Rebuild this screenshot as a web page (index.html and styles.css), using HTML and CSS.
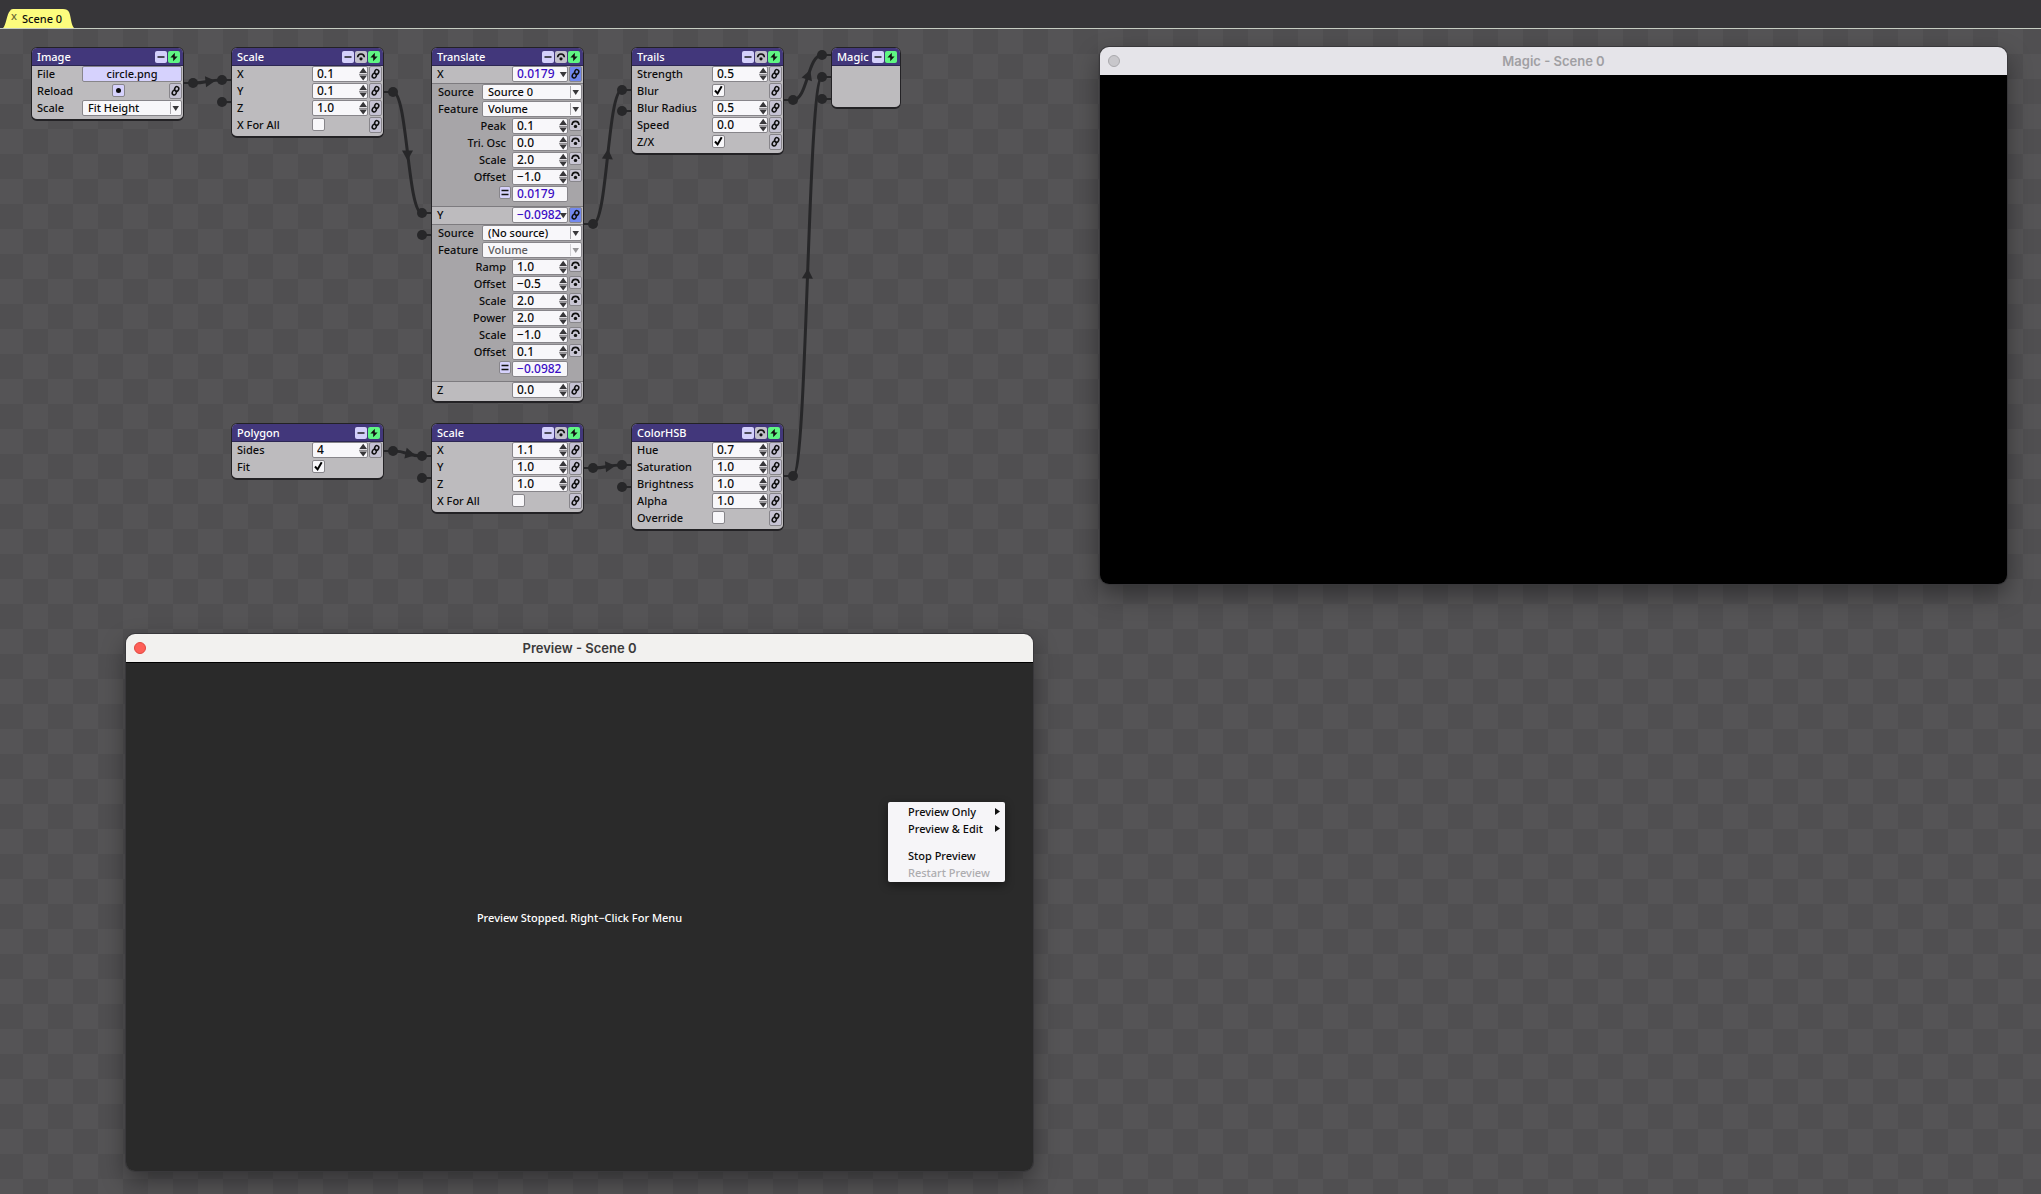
FILE: index.html
```html
<!DOCTYPE html>
<html lang="en">
<head>
<meta charset="utf-8">
<title>Scene 0</title>
<link rel="stylesheet" href="styles.css">
</head>
<body>
<header class="tabbar">
  <div class="tab">
    <svg class="tab-shape" viewBox="0 0 71 19" preserveAspectRatio="none" aria-hidden="true"><path d="M0 19C3 17 4 4 7 2C8 0 9 0 12 0H60C63 0 65 1 66 3C68 7 68 16 71 19Z"/></svg>
    <button class="tab-close" aria-label="Close tab">x</button>
    <a class="tab-name" href="#scene">Scene 0</a>
  </div>
</header>
<main class="canvas" id="scene"></main>
<script src="app.js"></script>
</body>
</html>
```

FILE: styles.css
```css
* { box-sizing: border-box; }
html, body { height: 100%; }
body {
  margin: 0;
  display: flex;
  flex-direction: column;
  overflow: hidden;
  background: #555456;
  color: #0c0c0c;
  font: 500 11px/17px "Noto Sans", "Open Sans", sans-serif;
}
button, input, select {
  font: inherit;
  color: inherit;
  margin: 0;
  padding: 0;
  appearance: none;
  border: 0;
  background: none;
}

/* tab bar */
.tabbar {
  height: 29px;
  flex: none;
  display: flex;
  align-items: flex-end;
  padding-left: 3px;
  background: #373639;
  border-bottom: 1px solid #c6cdc2;
}
.tab {
  position: relative;
  display: flex;
  height: 19px;
  width: 71px;
  padding-left: 8px;
  gap: 5px;
}
.tab-shape { position: absolute; inset: 0; width: 100%; height: 100%; fill: #fdfc7d; }
.tab-close { position: relative; width: 6px; height: 13px; line-height: 12px; font-size: 11px; color: #6b6a35; }
.tab-name { position: relative; line-height: 20px; color: inherit; text-decoration: none; }

/* node canvas */
.canvas {
  flex: 1;
  position: relative;
  background: conic-gradient(#504f51 25%, #555456 0 50%, #504f51 0 75%, #555456 0) 48px 0 / 50px 50px;
}
.wires { position: absolute; left: 0; top: 0; width: 910px; height: 560px; }
.wires .line { fill: none; stroke: #272729; stroke-width: 3px; }
.wires .stub { fill: none; stroke: #272729; stroke-width: 2px; }
.wires .mark { fill: #272729; }

.node {
  position: absolute;
  width: 153px;
  border: 1px solid #232225;
  border-bottom-width: 2px;
  border-radius: 6px;
  padding-bottom: 2px;
  background: #bdbbbe;
}
.node-magic { width: 70px; height: 62px; }
.node-head {
  display: flex;
  align-items: center;
  gap: 1px;
  height: 18px;
  padding: 0 3px 0 5px;
  border-radius: 5px 5px 0 0;
  border-bottom: 1px solid #2c2653;
  background: #42377b;
}
.node-name { flex: 1; margin: 0; font: inherit; color: #fff; }
.head-btn { display: block; width: 12px; height: 12px; border-radius: 2px; background: #d4d0fb; }
.head-btn.grey { background: #c3c1cb; }
.head-btn.green { background: #5ff783; }
.head-btn svg, .link svg, .target svg, .equals svg { display: block; width: 100%; height: 100%; }

.row { display: flex; align-items: flex-start; height: 17px; padding: 0 1px 0 5px; gap: 1px; }
.row .label { flex: 1; white-space: nowrap; line-height: 16px; }
.sub { background: #a7a5a8; border: solid #7d7b7f; border-width: 1px 0; padding: 0 0 3px; }
.sub .label { text-align: right; padding-right: 5px; }
.sub .label.start { text-align: left; padding-right: 0; padding-left: 1px; }

.field {
  display: flex;
  align-items: center;
  width: 56px;
  height: 16px;
  border: 1px solid #87858a;
  border-radius: 2px;
  background: #f8f7fa;
}
.field input { flex: 1; width: 20px; height: 14px; padding-left: 4px; font-size: 12px; line-height: 14px; }
.field svg { display: block; width: 10px; height: 14px; }
.field.computed { color: #3a0cc4; }
.field.bound svg { margin-left: -4px; }
.wide { width: 100px; }
.file { height: 16px; border: 1px solid #87858a; border-radius: 2px; background: #d6d2fd; line-height: 14px; }
.picker { display: grid; height: 16px; align-items: center; }
.picker select {
  grid-area: 1 / 1;
  width: 100px;
  height: 16px;
  padding-left: 5px;
  border: 1px solid #87858a;
  border-radius: 2px;
  background: #f8f7fa;
  line-height: 14px;
  opacity: 1;
}
.picker svg { grid-area: 1 / 1; justify-self: end; width: 12px; height: 16px; pointer-events: none; }
.picker select:disabled { color: #5e5d60; }
.picker select:disabled + svg { opacity: .5; }

.link { width: 13px; height: 16px; border: 1px solid #87858a; border-radius: 2px; background: #c6c3d4; }
.link.on { background: #7288ef; }
.target { width: 13px; height: 13px; border: 1px solid #87858a; border-radius: 2px; background: #c9c6d4; }
.gap { width: 13px; }
.equals { width: 12px; height: 13px; border: 1px solid #87858a; border-radius: 2px; background: #d6d2fd; }
.slot { display: flex; width: 56px; height: 16px; }
.check { display: grid; width: 13px; height: 13px; margin-top: 1px; }
.check input { grid-area: 1 / 1; width: 13px; height: 13px; border: 1px solid #87858a; border-radius: 2px; background: #f8f7fa; }
.check svg { grid-area: 1 / 1; width: 13px; height: 13px; visibility: hidden; pointer-events: none; }
.check input:checked + svg { visibility: visible; }
.slot.reload { width: 86px; padding-left: 30px; }
.reload button { width: 13px; height: 13px; margin-top: 1px; border: 1px solid #87858a; border-radius: 2px; background: #d6d2fd; display: grid; place-items: center; }
.reload button::before { content: ""; width: 5px; height: 5px; border-radius: 50%; background: #0c0c0c; }

/* floating windows */
.window {
  position: absolute;
  width: 907px;
  height: 537px;
  display: flex;
  flex-direction: column;
  border-radius: 9px;
  overflow: hidden;
  box-shadow: 0 0 0 1px #39383b, 0 10px 24px rgba(0, 0, 0, .4);
}
.title {
  display: grid;
  grid-template-columns: 1fr auto 1fr;
  align-items: center;
  height: 28px;
  padding: 0 8px;
  background: #f2f1ef;
  color: #3b3a3a;
  font: 600 13px/26px Inter, sans-serif;
}
.title h2 { margin: 0; font: inherit; }
.dot { width: 12px; height: 12px; border: 1px solid #df483f; border-radius: 50%; background: #fe5f57; }
.inactive .title { background: #e5e4e9; color: #a09fa3; }
.inactive .dot { border-color: #a9a8ac; background: #c8c7cb; }
.screen { flex: 1; display: grid; place-items: center; border-top: 1px solid #000; background: #2a2a2a; color: #fff; }
.screen p { margin: 0; }
.inactive .screen { background: #000; }

.menu {
  position: absolute;
  width: 117px;
  padding: 1px 0;
  display: flex;
  flex-direction: column;
  border-radius: 2px;
  background: #f6f5f8;
  box-shadow: 0 3px 10px rgba(0, 0, 0, .45);
}
.menu button { display: flex; justify-content: space-between; align-items: center; height: 17px; padding: 0 5px 0 20px; white-space: nowrap; }
.menu button:disabled { color: #adacaf; }
.menu hr { width: 100%; height: 10px; margin: 0; border: 0; }
.menu svg { width: 5px; height: 7px; }
```

FILE: app.js
```js
const I = {
  minus: '<svg viewBox="0 0 12 12"><path d="M2.500 6h7" stroke="#111" stroke-width="1.400"/></svg>',
  eye: '<svg viewBox="0 0 12 12"><path d="M2.600 6.300C3 1.900 9 1.900 9.400 6.300" fill="none" stroke="#111" stroke-width="1.600"/><circle cx="6" cy="7.800" r="1.600" fill="#111"/></svg>',
  eyeSmall: '<svg viewBox="0 0 11 11"><path d="M2 6C2.400 1.200 8.600 1.200 9 6" fill="none" stroke="#111" stroke-width="1.700"/><circle cx="5.500" cy="7.400" r="1.700" fill="#111"/></svg>',
  bolt: '<svg viewBox="0 0 12 12"><path d="M6.800 1.800 2.400 6.600H5.200V10.200L9.600 5.400H6.800Z" fill="#111"/></svg>',
  chain: '<svg viewBox="0 0 11 14"><g fill="none" stroke="#111" stroke-width="1.500"><ellipse cx="6.700" cy="5" rx="2" ry="2.400" transform="rotate(25 6.700 5)"/><ellipse cx="4.300" cy="8.600" rx="2" ry="2.400" transform="rotate(25 4.300 8.600)"/></g></svg>',
  spin: '<svg viewBox="0 0 10 14"><path d="M2.300 6 6.200 .8 10 6ZM2.300 8.600 6.200 13.600 10 8.600Z" fill="#38373a"/><path d="M2 7.300h8" stroke="#77757a"/></svg>',
  drop: '<svg viewBox="0 0 10 14"><path d="M2.800 5h7L6.300 10.300Z" fill="#38373a"/></svg>',
  select: '<svg viewBox="0 0 12 16"><path d="M.5 2v12" stroke="#aaa8ad"/><path d="M2.500 6h6.500L5.700 11Z" fill="#38373a"/></svg>',
  equals: '<svg viewBox="0 0 10 11"><path d="M1.500 3.500h7M1.500 7.500h7" stroke="#111" stroke-width="1.500"/></svg>',
  tick: '<svg viewBox="0 0 13 13"><path d="M3 6.500 5.600 9.400 9.700 2.200" fill="none" stroke="#000" stroke-width="2"/></svg>',
  more: '<svg viewBox="0 0 5 7"><path d="M0 0 5 3.500 0 7Z" fill="#111"/></svg>'
};
let n = 0;
const link = on => `<button class="link${on ? ' on' : ''}" aria-label="Link">${I.chain}</button>`;
const target = `<button class="target" aria-label="Modify">${I.eyeSmall}</button>`;
const lab = (id, t, c = '') => `<label class="label ${c}" for="${id}">${t}</label>`;
const input = (id, v, icon, c = '') => `<span class="field ${c}"><input id="${id}" value="${v}">${icon}</span>`;
const row = html => `<div class="row">${html}</div>`;
const num = (t, v) => { const id = 'f' + n++; return row(lab(id, t) + input(id, v, I.spin) + link()); };
const bound = (t, v) => { const id = 'f' + n++; return row(lab(id, t) + input(id, v, I.drop, 'computed bound') + link(true)); };
const mod = (t, v) => { const id = 'f' + n++; return row(lab(id, t) + input(id, v, I.spin) + target); };
const check = (t, on, linked = true) => { const id = 'f' + n++; return row(lab(id, t) + `<span class="slot"><span class="check"><input type="checkbox" id="${id}"${on ? ' checked' : ''}>${I.tick}</span></span>` + (linked ? link() : '<span class="gap"></span>')); };
const pick = (t, v, off, c = 'start') => { const id = 'f' + n++; return row(lab(id, t, c) + `<span class="picker"><select id="${id}"${off ? ' disabled' : ''}><option>${v}</option></select>${I.select}</span>`); };
const result = v => row(`<span class="label"></span><button class="equals" aria-label="Result">${I.equals}</button><span class="field computed"><input aria-label="Result value" readonly value="${v}"></span><span class="gap"></span>`);
const node = (x, y, name, body, eye = true, c = '') => `<section class="node ${c}" style="left:${x}px;top:${y - 29}px"><div class="node-head"><h2 class="node-name">${name}</h2><button class="head-btn" aria-label="Collapse">${I.minus}</button>${eye ? `<button class="head-btn grey" aria-label="Solo">${I.eye}</button>` : ''}<button class="head-btn green" aria-label="Enable">${I.bolt}</button></div>${body}</section>`;

const nodes = [
  node(31, 47, 'Image',
    row('<span class="label">File</span><button class="file wide">circle.png</button>') +
    row(`<span class="label">Reload</span><span class="slot reload"><button aria-label="Reload"></button></span>${link()}`) +
    pick('Scale', 'Fit Height', false, ''), false),
  node(231, 47, 'Scale', num('X', '0.1') + num('Y', '0.1') + num('Z', '1.0') + check('X For All', false)),
  node(431, 47, 'Translate',
    bound('X', '0.0179') +
    `<div class="sub">${pick('Source', 'Source 0') + pick('Feature', 'Volume') + mod('Peak', '0.1') + mod('Tri. Osc', '0.0') + mod('Scale', '2.0') + mod('Offset', '−1.0') + result('0.0179')}</div>` +
    bound('Y', '−0.0982') +
    `<div class="sub">${pick('Source', '(No source)') + pick('Feature', 'Volume', true) + mod('Ramp', '1.0') + mod('Offset', '−0.5') + mod('Scale', '2.0') + mod('Power', '2.0') + mod('Scale', '−1.0') + mod('Offset', '0.1') + result('−0.0982')}</div>` +
    num('Z', '0.0')),
  node(631, 47, 'Trails', num('Strength', '0.5') + check('Blur', true) + num('Blur Radius', '0.5') + num('Speed', '0.0') + check('Z/X', true)),
  node(831, 47, 'Magic', '', false, 'node-magic'),
  node(231, 423, 'Polygon', num('Sides', '4') + check('Fit', true, false), false),
  node(431, 423, 'Scale', num('X', '1.1') + num('Y', '1.0') + num('Z', '1.0') + check('X For All', false)),
  node(631, 423, 'ColorHSB', num('Hue', '0.7') + num('Saturation', '1.0') + num('Brightness', '1.0') + num('Alpha', '1.0') + check('Override', false))
];

/* each wire runs from an output pin to an input pin; the arrow sits near halfway */
const wires = [
  [193, 83, 222, 80, -6], [393, 92, 422, 213, 90], [593, 224, 622, 90, -86], [793, 100, 822, 55, -70],
  [793, 476, 822, 77, -88], [393, 451, 422, 456, 12], [593, 468, 622, 465, -6]
];
const free = [[222, 102], [422, 235], [622, 111], [822, 99], [422, 478], [622, 487]];
const pin = (x, y, side) => `<path class="stub" d="M${x} ${y}h${side * 10}"/><circle class="mark" cx="${x}" cy="${y}" r="5"/>`;
let g = '';
for (const [a, b, c, d, r] of wires) {
  const m = (a + c) / 2;
  g += `<path class="line" d="M${a} ${b}C${m} ${b} ${m} ${d} ${c} ${d}"/>` + pin(a, b, -1) + pin(c, d, 1) +
    `<path class="mark" d="M-4 -5.500 6 0 -4 5.500Z" transform="translate(${m} ${(b + d) / 2}) rotate(${r}) translate(2 0)"/>`;
}
for (const [x, y] of free) g += pin(x, y, 1);

const win = (x, y, t, body, c = '') => `<section class="window ${c}" style="left:${x}px;top:${y - 29}px"><div class="title"><button class="dot" aria-label="Close"></button><h2>${t}</h2></div><div class="screen">${body}</div></section>`;

document.getElementById('scene').innerHTML =
  `<svg class="wires" viewBox="0 29 910 560" aria-hidden="true">${g}</svg>` + nodes.join('') +
  win(1100, 47, 'Magic - Scene 0', '', 'inactive') +
  win(126, 634, 'Preview - Scene 0', '<p>Preview Stopped. Right−Click For Menu</p>') +
  `<div class="menu" role="menu" style="left:888px;top:773px"><button role="menuitem">Preview Only${I.more}</button><button role="menuitem">Preview &amp; Edit${I.more}</button><hr><button role="menuitem">Stop Preview</button><button role="menuitem" disabled>Restart Preview</button></div>`;
```
